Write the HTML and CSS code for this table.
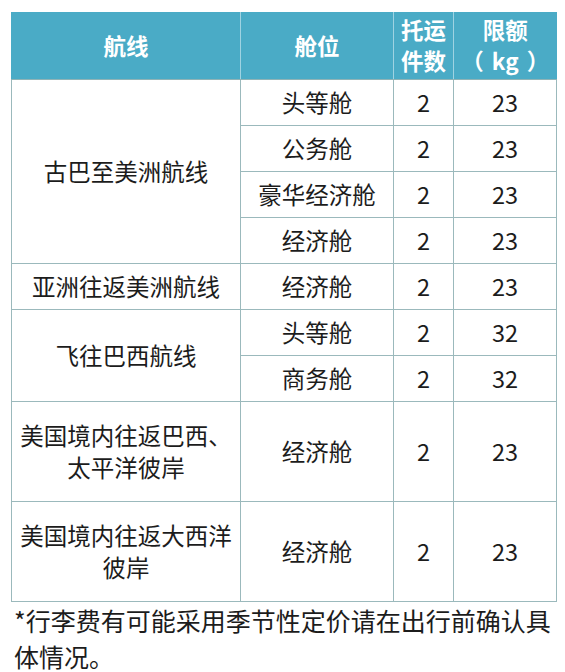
FILE: index.html
```html
<!DOCTYPE html>
<html lang="zh-CN">
<head>
<meta charset="utf-8">
<title>行李额度</title>
<link rel="stylesheet" href="styles.css">
</head>
<body>
<div class="page">
  <table class="baggage">
    <colgroup>
      <col class="c-route">
      <col class="c-cabin">
      <col class="c-count">
      <col class="c-limit">
    </colgroup>
    <thead>
      <tr class="head">
        <th>航线</th>
        <th>舱位</th>
        <th>托运<br>件数</th>
        <th>限额<br>（<span class="unit">kg</span>）</th>
      </tr>
    </thead>
    <tbody>
      <tr class="r">
        <td rowspan="4">古巴至美洲航线</td>
        <td>头等舱</td><td>2</td><td>23</td>
      </tr>
      <tr class="r"><td>公务舱</td><td>2</td><td>23</td></tr>
      <tr class="r"><td>豪华经济舱</td><td>2</td><td>23</td></tr>
      <tr class="r"><td>经济舱</td><td>2</td><td>23</td></tr>
      <tr class="r">
        <td>亚洲往返美洲航线</td>
        <td>经济舱</td><td>2</td><td>23</td>
      </tr>
      <tr class="r">
        <td rowspan="2">飞往巴西航线</td>
        <td>头等舱</td><td>2</td><td>32</td>
      </tr>
      <tr class="r"><td>商务舱</td><td>2</td><td>32</td></tr>
      <tr class="tall">
        <td>美国境内往返巴西、太平洋彼岸</td>
        <td>经济舱</td><td>2</td><td>23</td>
      </tr>
      <tr class="tall">
        <td>美国境内往返大西洋彼岸</td>
        <td>经济舱</td><td>2</td><td>23</td>
      </tr>
    </tbody>
  </table>
  <p class="note">*行李费有可能采用季节性定价请在出行前确认具体情况。</p>
</div>
</body>
</html>
```

FILE: styles.css
```css
html, body {
  margin: 0;
  padding: 0;
  background: #ffffff;
}

body {
  font-family: "Noto Sans CJK SC", "Noto Sans", sans-serif;
  color: #1c1c1c;
}

.page {
  padding: 12px 9px 0 11px;
}

.baggage {
  border-collapse: collapse;
  table-layout: fixed;
  width: 545px;
  font-size: 23.5px;
}

.c-route { width: 229px; }
.c-cabin { width: 153px; }
.c-count { width: 60px; }
.c-limit { width: 103px; }

.baggage th {
  background: #4aabc6;
  color: #ffffff;
  font-weight: 700;
  font-size: 22.5px;
  line-height: 31px;
  padding: 0;
  white-space: nowrap;
  border-left: 1px solid #9fd3e2;
  border-bottom: 1px solid #8fb3b6;
}

.baggage th:first-child {
  border-left: 1px solid #4aabc6;
}

.unit {
  margin: 0 8px;
}

.head {
  height: 67px;
}

.baggage td {
  border: 1px solid #9bb9bc;
  text-align: center;
  padding: 0 4px;
  line-height: 32px;
}

.baggage td:first-child {
  padding: 0 6px;
}

.r {
  height: 46px;
}

.tall {
  height: 100px;
}

.note {
  margin: 0;
  padding: 0 4px 0 3px;
  font-size: 25px;
  line-height: 36px;
  color: #1c1c1c;
}
```
